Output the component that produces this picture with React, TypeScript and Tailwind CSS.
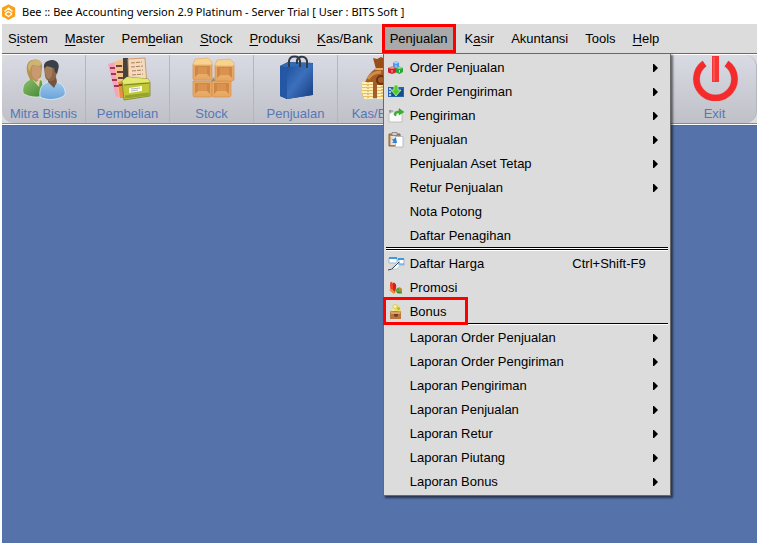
import type { ReactNode } from "react"

const menus = [
    { before: "S", key: "i", after: "stem" },
    { before: "", key: "M", after: "aster" },
    { before: "Pem", key: "b", after: "elian" },
    { before: "", key: "S", after: "tock" },
    { before: "", key: "P", after: "roduksi" },
    { before: "", key: "K", after: "as/Bank" },
    { before: "Pen", key: "j", after: "ualan", open: true },
    { before: "K", key: "a", after: "sir" },
    { before: "Akuntansi", key: "", after: "" },
    { before: "Tools", key: "", after: "" },
    { before: "", key: "H", after: "elp" },
]

const BeeLogo = () => (
    <svg width="16" height="16" viewBox="1.500 0 16 16" aria-hidden="true">
        <path d="M8 1 14 4.200V12L8 15.200 2 12V4.200Z" fill="#f9a11b" stroke="#f9a11b" strokeWidth="1.4" strokeLinejoin="round" />
        <path d="M4 7.500 8 4.200 12 7.500M5 9.500 8 7.500 11 9.500V10.500L8 12.500 5 10.500Z" fill="none" stroke="#fff" strokeWidth="1.4" />
    </svg>
)

const PeopleIcon = () => (
    <svg width="48" height="46" viewBox="0 0 48 46" aria-hidden="true">
        <defs>
            <linearGradient id="green" x1="0" y1="0" x2="1" y2="1">
                <stop offset="0" stopColor="#8dc06c" />
                <stop offset="1" stopColor="#3f8433" />
            </linearGradient>
            <linearGradient id="shirt" x1="0" y1="0" x2="0" y2="1">
                <stop offset="0" stopColor="#9cc9ec" />
                <stop offset="1" stopColor="#6aa3d8" />
            </linearGradient>
        </defs>
        <path d="M3 38C2 31 4 27 11 24L22 25 25 41C17 43 7 42 3 38Z" fill="url(#green)" stroke="#dfe9d8" strokeWidth="0.8" />
        <path d="M9 22C6 17 5 7 12 5C19 3 23 7 22 13L21 22 16 26 10 25Z" fill="#b3934f" />
        <path d="M8 12C8 4 20 2 22 9L19 11 12 10 9 17Z" fill="#cdb472" />
        <path d="M12 12C15 10 20 10 21 14C21 20 19 24 16 25C12 23 11 17 12 12Z" fill="#c99a70" />
        <path d="M12 24 16 27 20 24 19 32Z" fill="#efcaa8" />
        <path d="M20 42C19 33 22 29 28 27L37 27C43 29 46 34 45 40C39 45 27 46 20 42Z" fill="url(#shirt)" stroke="#e2edf8" strokeWidth="0.8" />
        <path d="M28 22H36L37 27 34 33 28 27Z" fill="#76543b" />
        <path d="M24 13C24 8 29 7 34 9C38 12 37 20 35 24C30 28 26 26 25 21Z" fill="#8b6648" />
        <path d="M25 15C26 10 30 11 32 13C33 18 32 22 29 24C26 23 25 20 25 15Z" fill="#a67d59" />
        <path d="M24 13C23 7 28 5 33 5C38 6 40 10 38 15L37 19 35 17 34 13 27 11Z" fill="#384048" />
    </svg>
)

const FoldersIcon = () => (
    <svg width="48" height="46" viewBox="0 0 48 46" aria-hidden="true">
        <path d="M4 9 11 7 19 41 12 42Z" fill="#f3a3bd" />
        <path d="M10 7 19 4 24 42 15 43Z" fill="#f1c18e" />
        <path d="M14 27 23 26 24 43 16 43Z" fill="#ee8d3d" />
        <path d="M6 13H11M7 19H12M8 25H13M10 31H15" stroke="#a43354" strokeWidth="2" />
        <path d="M12 11H18M13 17H19M14 23H20M15 30H20" stroke="#6d4138" strokeWidth="2" />
        <path d="M19 3H24L26 32H19Z" fill="#46433e" />
        <path d="M24 4 41 3 43 31 25 31Z" fill="#f4dbc0" stroke="#c99d73" />
        <path d="M27 8 38 7M27 12 39 11M28 16 39 15M28 20 39 19" stroke="#a98057" strokeDasharray="4 1" />
        <path d="M18 26 23 22 44 24 46 27V41L20 45Z" fill="#c1c837" stroke="#7e8322" strokeWidth="0.8" />
        <path d="M18 26 23 22 44 24 46 27 20 29Z" fill="#e3e86f" />
        <path d="M20 30 45 28" stroke="#7e8322" />
        <path d="M25 33 38 31V36L25 38Z" fill="#fffef0" />
        <path d="M27 34 36 33M27 36 34 35" stroke="#8d92a0" strokeWidth="0.7" />
        <path d="M21 42 45 39" stroke="#92a332" strokeWidth="3" />
    </svg>
)

const BoxesIcon = () => (
    <svg width="48" height="46" viewBox="0 0 48 46" aria-hidden="true">
        {["5 26", "24 26", "5 9", "27 10"].map((pos) => (
            <g key={pos} transform={`translate(${pos})`}>
                <path d="M0 0H19V15L17 16H1L0 15Z" fill="#e9a862" stroke="#d58f4c" strokeWidth="0.7" />
                <path d="M2 2H17V13H2Z" fill="#cf8747" />
                <path d="M2 13 5 10H14L17 13Z" fill="#e7ab6a" />
                <path d="M5 3H14V10H5Z" fill="#d9934f" />
            </g>
        ))}
        <path d="M5 9 7 4 20 3 24 7V10H5ZM27 10 29 5 42 4 46 8V11H27Z" fill="#f6d48f" stroke="#e3ae66" strokeWidth="0.7" />
        <path d="M23 26 26 22 27 26Z" fill="#9b8a72" />
    </svg>
)

const BagIcon = () => (
    <svg width="48" height="46" viewBox="0 0 48 46" aria-hidden="true">
        <defs>
            <linearGradient id="bag" x1="0" y1="0" x2="1" y2="1">
                <stop offset="0" stopColor="#1d4f9c" />
                <stop offset="0.45" stopColor="#3c70bd" />
                <stop offset="1" stopColor="#173c7e" />
            </linearGradient>
        </defs>
        <path d="M8 11 16 7 41 8 40 40 15 44 8 41Z" fill="#16386f" />
        <path d="M15 11 41 9V40L15 44Z" fill="url(#bag)" />
        <path d="M8 11 15 11V44L8 41Z" fill="#2458a4" />
        <path d="M8 11 16 7 41 8 40 10 15 12Z" fill="#306cb7" />
        <path d="M17 12V6C18 0 27 0 28 6V12M25 9V5C27 0 34 1 35 6V13" fill="none" stroke="#343a45" strokeWidth="2" />
    </svg>
)

const MoneyIcon = () => (
    <svg width="48" height="46" viewBox="0 0 48 46" aria-hidden="true">
        <path d="M17 3 21 4 25 2 29 4 35 3 32 14H20Z" fill="#994d17" />
        <path d="M19 14C10 20 6 31 9 43H45C47 29 42 20 32 14Z" fill="#a65d25" />
        <path d="M12 24C15 19 19 17 25 17" fill="none" stroke="#cf8d48" strokeWidth="3" />
        <path d="M19 14H33" stroke="#e3ad6a" strokeWidth="2" />
        <circle cx="25" cy="25" r="4" fill="none" stroke="#6c3210" strokeWidth="2" />
        <path d="M6 28H17V43H8L6 40ZM21 31H31V43H21Z" fill="#e4bd6a" />
        <path d="M6 28H17M6 31H17M6 34H17M6 37H17M7 40H17M8 43H17M21 31H31M21 34H31M21 37H31M21 40H31M21 43H31" stroke="#fff0b9" strokeWidth="2" />
        <path d="M12 27V43M26 31V43" stroke="#bc883b" strokeDasharray="1 2" />
    </svg>
)

const PowerIcon = () => (
    <svg width="48" height="46" viewBox="0 0 48 46" aria-hidden="true">
        <path d="M13.500 8.500A19 19 0 1 0 35.500 8.500" fill="none" stroke="#b58d92" strokeWidth="7.500" opacity="0.4" />
        <path d="M13.500 8.500A19 19 0 1 0 35.500 8.500" fill="none" stroke="#f52a2a" strokeWidth="6.500" />
        <path d="M21 1H28V27H21Z" fill="#f83434" />
        <path d="M22 2H24V26H22Z" fill="#fb5252" />
    </svg>
)

const CubesIcon = () => (
    <svg width="16" height="16" viewBox="0 0 16 16" aria-hidden="true">
        <path d="M5 2.500 8 1 11 2.500V7L8 9 5 7Z" fill="#4f97ee" />
        <path d="M5 2.500 8 1 11 2.500 8 4Z" fill="#a9d2fb" />
        <path d="M0 8 4 6.500 8 8V12.500L4 14 0 12.500Z" fill="#d8212d" />
        <path d="M0 8 4 6.500 8 8 4 9Z" fill="#f38c8d" />
        <path d="M8 8 11.500 6.500 15 8V12L11.500 14 8 12.500Z" fill="#28a637" />
        <path d="M8 8 11.500 6.500 15 8 11.500 9Z" fill="#96dd87" />
        <path d="M8 5V7.500M4 10V12.500M11.500 10V12.500" stroke="#fff" strokeWidth="0.7" />
    </svg>
)

const ImportIcon = () => (
    <svg width="16" height="16" viewBox="0 0 16 16" aria-hidden="true">
        <path d="M0 3H16V13H0Z" fill="#2265ae" />
        <path d="M1 4H3V6H1ZM1 7H3V9H1ZM1 10H3V12H1Z" fill="#9fd0ef" />
        <path d="M4 5H15V12H4Z" fill="#164d8d" />
        <path d="M6 1H10V6H13L8 12 3 6H6Z" fill="#53cb2e" stroke="#d5f4bb" strokeWidth="0.8" />
    </svg>
)

const ShipIcon = () => (
    <svg width="16" height="16" viewBox="0 0 16 16" aria-hidden="true">
        <path d="M1 6 4 4H13L14 6V14H1Z" fill="#fafafa" stroke="#b7b7b7" strokeWidth="0.8" />
        <path d="M1 3H5M2 5V2" stroke="#888" />
        <path d="M6 7C6 4 8 3 11 3V0.500L16 4 11 7V5C9 5 8 5.500 8 8Z" fill="#32b52a" stroke="#258e20" strokeWidth="0.4" />
    </svg>
)

const PasteIcon = () => (
    <svg width="16" height="16" viewBox="0 0 16 16" aria-hidden="true">
        <path d="M1 2H12V14H1Z" fill="#bc8751" stroke="#936239" />
        <path d="M4 0.500H9V3.500H4Z" fill="#cfcfcf" stroke="#777" strokeWidth="0.7" />
        <path d="M2.500 4H8V13H2.500Z" fill="#e9e2db" />
        <path d="M7.500 4.500H15V15H7.500Z" fill="#fff" stroke="#a5b2c2" strokeWidth="0.8" />
        <path d="M3 6 5 7.500 8 5.500 9 11H4L5.500 9.500Z" fill="#347fd1" />
    </svg>
)

const PriceIcon = () => (
    <svg width="17" height="16" viewBox="0 0 17 16" aria-hidden="true">
        <path d="M1 2H9V7H1ZM10 3H16V9H10Z" fill="#fff" stroke="#91b6d4" />
        <path d="M1 2H9M10 3H16" stroke="#3f99df" strokeWidth="2" />
        <path d="M0 14 4 13 12 6" fill="none" stroke="#3a4654" />
        <path d="M5 11 11 4 12 9 9 13H3Z" fill="#fff" stroke="#9fb7c8" strokeWidth="0.6" />
        <path d="M4 13 11 6" stroke="#37495b" />
        <path d="M10 8H16" stroke="#3f99df" />
    </svg>
)

const PromoIcon = () => (
    <svg width="16" height="16" viewBox="0 0 16 16" aria-hidden="true">
        <path d="M2 5C2 1 4 1 5 4L6 13C3 13 2 9 2 5Z" fill="#e94426" />
        <path d="M5 3C7 2 9 5 8 8L7 13 5 11Z" fill="#d51f18" />
        <path d="M1 10 4 9 7 12 6 14Z" fill="#f08c3c" />
        <circle cx="11" cy="10.500" r="3" fill="#5fa32f" />
        <path d="M11 10.500V7.500A3 3 0 0 1 14 10.500Z" fill="#d9862b" />
        <path d="M9 12.500 14 13" stroke="#357b28" />
    </svg>
)

const BonusIcon = () => (
    <svg width="16" height="16" viewBox="0 0 16 16" aria-hidden="true">
        <path d="M3 8 4 3 8 0 12 3 13 8Z" fill="#f3dc62" />
        <circle cx="7" cy="2.500" r="2" fill="#fff79b" stroke="#c6ac36" strokeWidth="0.5" />
        <path d="M4 4 7 6 5 8Z" fill="#d7efef" />
        <circle cx="10.500" cy="4.500" r="1.500" fill="#94c84b" />
        <path d="M2 7H13V15H2Z" fill="#b87642" />
        <path d="M2 7 7 8 13 7 12 10H3Z" fill="#dba064" />
        <path d="M6 10H10V12L8 13 6 12Z" fill="#753f1d" />
    </svg>
)

type Entry = {
    label: string
    icon?: ReactNode
    sub?: boolean
    shortcut?: string
    marked?: boolean
}

const orders: Entry[] = [
    { label: "Order Penjualan", icon: <CubesIcon />, sub: true },
    { label: "Order Pengiriman", icon: <ImportIcon />, sub: true },
    { label: "Pengiriman", icon: <ShipIcon />, sub: true },
    { label: "Penjualan", icon: <PasteIcon />, sub: true },
    { label: "Penjualan Aset Tetap", sub: true },
    { label: "Retur Penjualan", sub: true },
    { label: "Nota Potong" },
    { label: "Daftar Penagihan" },
]

const prices: Entry[] = [
    { label: "Daftar Harga", icon: <PriceIcon />, shortcut: "Ctrl+Shift-F9" },
    { label: "Promosi", icon: <PromoIcon /> },
    { label: "Bonus", icon: <BonusIcon />, marked: true },
]

const reports: Entry[] = [
    { label: "Laporan Order Penjualan", sub: true },
    { label: "Laporan Order Pengiriman", sub: true },
    { label: "Laporan Pengiriman", sub: true },
    { label: "Laporan Penjualan", sub: true },
    { label: "Laporan Retur", sub: true },
    { label: "Laporan Piutang", sub: true },
    { label: "Laporan Bonus", sub: true },
]

const MenuEntry = ({ label, icon, sub, shortcut, marked }: Entry) => (
    <li className="relative">
        <button type="button" className="flex h-6 w-full items-center pl-[2px] pr-[10px] pt-[2px] text-left">
            <span className="flex w-[22px] shrink-0">{icon}</span>
            <span className="grow">{label}</span>
            {shortcut && <span className="pr-3">{shortcut}</span>}
            {sub && (
                <svg width="5" height="8" viewBox="0 0 5 8" aria-hidden="true">
                    <path d="M0 0H1L5 4 1 8H0Z" fill="#000" />
                </svg>
            )}
        </button>
        {marked && <span className="pointer-events-none absolute -left-[3px] -top-[2px] z-10 h-7 w-[85px] border-3 border-[#fe0000]" />}
    </li>
)

const Line = () => <li role="separator" className="h-[2px] border-b border-white bg-black" />

const SalesMenu = () => (
    <ul className="absolute left-px top-[29px] z-10 w-[288px] border border-[#696969] bg-[#dcdcdc] px-[2px] pb-[2px] pt-px shadow-[2px_2px_2px_#0008]">
        {orders.map((entry) => <MenuEntry key={entry.label} {...entry} />)}
        <Line />
        <Line />
        {prices.map((entry) => <MenuEntry key={entry.label} {...entry} />)}
        <Line />
        {reports.map((entry) => <MenuEntry key={entry.label} {...entry} />)}
    </ul>
)

const ToolButton = ({ label, className, children }: { label: string; className?: string; children: ReactNode }) => (
    <button type="button" className={`flex h-[68px] w-[84px] shrink-0 flex-col items-center justify-between border-r border-[#b4b5bd] bg-linear-to-b from-[#d9dbe4] to-[#bfc0c8] text-[#5877b5] ${className ?? ""}`}>
        <span className="h-[50px]">{children}</span>
        <span className="h-[18px] leading-[18px]">{label}</span>
    </button>
)

export default function App() {
    return (
        <div className="flex min-h-screen flex-col overflow-hidden bg-white pl-[2px] font-['Liberation_Sans',Arial,sans-serif] text-[13px] leading-4 text-black">
            <header className="flex h-6 items-center gap-1 whitespace-nowrap">
                <BeeLogo />
                <h1 className="font-['Noto_Sans','Open_Sans',sans-serif] text-[11px]">Bee :: Bee Accounting version 2.9 Platinum - Server Trial [ User : BITS Soft ]</h1>
            </header>
            <nav className="h-[30px] border-b border-[#696969] bg-[#dcdcdc]">
                <ul className="-ml-[2px] flex gap-px whitespace-nowrap">
                    {menus.map(({ before, key, after, open }) => (
                        <li key={before + key + after} className="relative">
                            <button type="button" className={open ? "h-[29px] border-3 border-[#fe0000] bg-[#a9a9a9] px-[5px]" : "h-[29px] px-2"}>
                                {before}
                                {key && <span className={open ? "" : "underline underline-offset-2"}>{key}</span>}
                                {after}
                            </button>
                            {open && <SalesMenu />}
                        </li>
                    ))}
                </ul>
            </nav>
            <div className="border-b border-[#696969] bg-white py-px">
                <div className="flex border-b border-[#8a8a8a] bg-[#dcdcdc]">
                    <ToolButton label="Mitra Bisnis" className="rounded-l-xl"><PeopleIcon /></ToolButton>
                    <ToolButton label="Pembelian"><FoldersIcon /></ToolButton>
                    <ToolButton label="Stock"><BoxesIcon /></ToolButton>
                    <ToolButton label="Penjualan"><BagIcon /></ToolButton>
                    <ToolButton label="Kas/Bank"><MoneyIcon /></ToolButton>
                    <div className="grow bg-linear-to-b from-[#d9dbe4] to-[#bfc0c8]" />
                    <ToolButton label="Exit" className="rounded-r-xl"><PowerIcon /></ToolButton>
                </div>
            </div>
            <main className="grow bg-[#5572aa]" />
        </div>
    )
}
